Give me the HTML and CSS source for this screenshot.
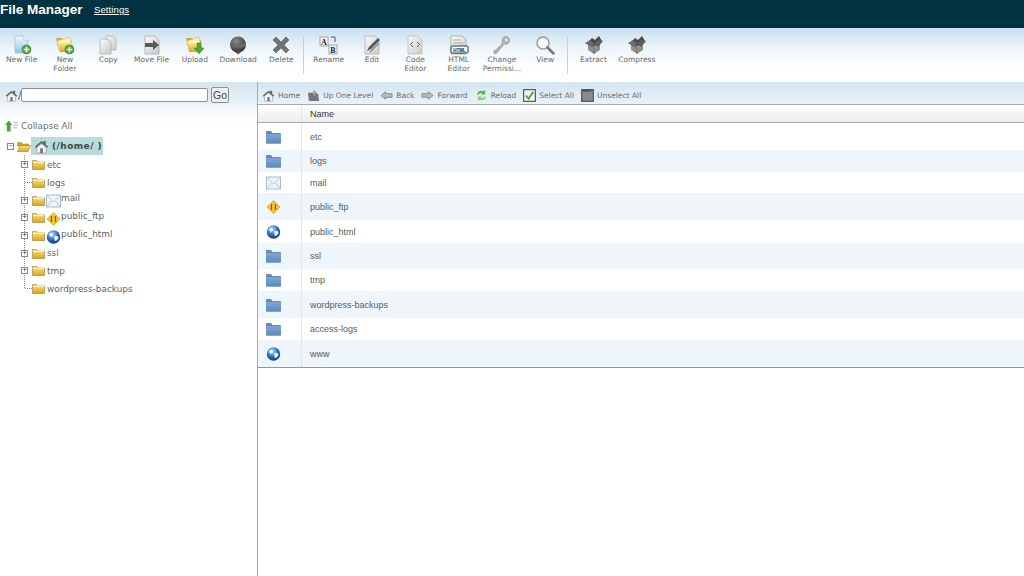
FILE: index.html
```html
<!DOCTYPE html>
<html lang="en">
<head>
<meta charset="utf-8">
<title>File Manager</title>
<link rel="stylesheet" href="styles.css">
</head>
<body>
<svg class="defs" width="0" height="0" aria-hidden="true">
  <defs>
    <linearGradient id="gFolder" x1="0" y1="0" x2="0" y2="1"><stop offset="0" stop-color="#fbe48a"/><stop offset="1" stop-color="#d9a520"/></linearGradient>
    <linearGradient id="gBlue" x1="0" y1="0" x2="0" y2="1"><stop offset="0" stop-color="#7ea6d6"/><stop offset="1" stop-color="#5f88bb"/></linearGradient>
    <linearGradient id="gPage" x1="0" y1="0" x2="1" y2="1"><stop offset="0" stop-color="#fafafa"/><stop offset="1" stop-color="#c9c9c9"/></linearGradient>
    <linearGradient id="gNew" x1="0" y1="0" x2="0" y2="1"><stop offset="0" stop-color="#f2f8fd"/><stop offset="1" stop-color="#8fc4ec"/></linearGradient>
    <radialGradient id="gGlobe" cx=".4" cy=".3" r=".8"><stop offset="0" stop-color="#bfe0fa"/><stop offset=".5" stop-color="#2a6fc0"/><stop offset="1" stop-color="#0c2f74"/></radialGradient>
    <radialGradient id="gBall" cx=".4" cy=".3" r=".8"><stop offset="0" stop-color="#8a8a8a"/><stop offset="1" stop-color="#2c2c2c"/></radialGradient>

    <symbol id="i-plus" viewBox="0 0 10 10"><circle cx="5" cy="5" r="4.6" fill="#4fa53c" stroke="#2f7d2a" stroke-width=".6"/><path d="M5 2.2v5.6M2.2 5h5.6" stroke="#fff" stroke-width="1.5"/></symbol>
    <symbol id="i-newfile" viewBox="0 0 20 20"><path d="M3 1h9l4 4v13H3z" fill="url(#gNew)" stroke="#9dbcd6" stroke-width=".7"/><path d="M12 1v4h4" fill="#fff" stroke="#9dbcd6" stroke-width=".7"/><use href="#i-plus" x="9.5" y="9.5" width="10" height="10"/></symbol>
    <symbol id="i-newfolder" viewBox="0 0 20 20"><path d="M1 3h6l2 2h7l2 11H4z" fill="#d4a93a"/><path d="M2 6l13-4 2 10-12 5z" fill="#fdf2b8" stroke="#cfa83a" stroke-width=".5"/><path d="M4 8h14l-1 9H5z" fill="url(#gFolder)"/><use href="#i-plus" x="9.5" y="9.5" width="10" height="10"/></symbol>
    <symbol id="i-copy" viewBox="0 0 20 20"><path d="M8 1h7l3 3v11H8z" fill="url(#gPage)" stroke="#aaa" stroke-width=".7"/><path d="M2 4h8l3 3v12H2z" fill="url(#gPage)" stroke="#aaa" stroke-width=".7"/></symbol>
    <symbol id="i-move" viewBox="0 0 20 20"><path d="M3 1h10l4 4v14H3z" fill="url(#gPage)" stroke="#a5a5a5" stroke-width=".7"/><path d="M3 8h8V5l6 5-6 5v-3H3z" fill="#5a5a5a"/></symbol>
    <symbol id="i-upload" viewBox="0 0 20 20"><path d="M1 3h6l2 2h7l2 11H4z" fill="#d4a93a"/><path d="M2 6l12-4 2 10-11 5z" fill="#fdf2b8" stroke="#cfa83a" stroke-width=".5"/><path d="M3 8h14l-1 9H4z" fill="url(#gFolder)"/><path d="M12 8h4v5h3l-5 6-5-6h3z" fill="#49a838" stroke="#2f7d2a" stroke-width=".4"/></symbol>
    <symbol id="i-download" viewBox="0 0 20 20"><circle cx="10" cy="9.5" r="8" fill="url(#gBall)"/><path d="M2 8c5 2.500 11 2.500 16 0v3c-5 2.500-11 2.500-16 0z" fill="#6a6a6a"/><path d="M7 17h6l-3 2.500z" fill="#555"/></symbol>
    <symbol id="i-delete" viewBox="0 0 20 20"><path d="M2 5l3-3 5 5 5-5 3 3-5 5 5 5-3 3-5-5-5 5-3-3 5-5z" fill="#727272" stroke="#5a5a5a" stroke-width=".6"/></symbol>
    <symbol id="i-rename" viewBox="0 0 20 20"><rect x="1" y="2" width="8" height="9" fill="#f4f4f4" stroke="#777" stroke-width=".6"/><rect x="10" y="10" width="8" height="9" fill="#f4f4f4" stroke="#777" stroke-width=".6"/><text class="svg-letter" x="5" y="9.500" text-anchor="middle">A</text><text class="svg-letter" x="14" y="17.500" text-anchor="middle">B</text><path d="M12 2h4v5" fill="none" stroke="#555" stroke-width="1"/></symbol>
    <symbol id="i-edit" viewBox="0 0 20 20"><path d="M3 1h10l4 4v14H3z" fill="url(#gPage)" stroke="#aaa" stroke-width=".7"/><path d="M5 16l2-4 9-9 2 2-9 9z" fill="#555"/><path d="M8 17l9-9" stroke="#888" stroke-width="1.200"/></symbol>
    <symbol id="i-code" viewBox="0 0 20 20"><path d="M3 1h10l4 4v14H3z" fill="url(#gPage)" stroke="#b5b5b5" stroke-width=".7"/><path d="M8 7l-2.500 2.500L8 12M12 7l2.500 2.500L12 12" fill="none" stroke="#555" stroke-width="1"/></symbol>
    <symbol id="i-html" viewBox="0 0 20 20"><path d="M2 1h11l4 4v14H2z" fill="url(#gPage)" stroke="#999" stroke-width=".7"/><path d="M4 5h7M4 8h10" stroke="#999" stroke-width=".8"/><rect x="2" y="11" width="17" height="7" rx="1" fill="#fff" stroke="#333" stroke-width="1"/><text class="svg-tiny" x="10.500" y="16.500" text-anchor="middle">HTML</text></symbol>
    <symbol id="i-key" viewBox="0 0 20 20"><path d="M12 2c3-1.500 6 1 5.500 4-.3 2.500-3 4-5.500 3L5 18l-3 1v-3l1-1 1 .5.500-1.500 1.500-.5.500-1.500 1.500-.5 2-2.500C10 6 10 3.500 12 2z" fill="#b5b5b5" stroke="#8a8a8a" stroke-width=".6"/><circle cx="14.500" cy="5" r="1.300" fill="#eee"/></symbol>
    <symbol id="i-view" viewBox="0 0 20 20"><circle cx="8" cy="8" r="6" fill="#f5f9fc" stroke="#9a9a9a" stroke-width="1.500"/><path d="M12.500 12.500l6 6" stroke="#777" stroke-width="2.500" stroke-linecap="round"/></symbol>
    <symbol id="i-box" viewBox="0 0 20 20"><path d="M4 9l6 3 6-3v6l-6 4-6-4z" fill="#8f8f8f"/><path d="M10 12v7" stroke="#666" stroke-width=".7"/><path d="M3 8l5-5 3 2 4-4 3 5-3 3-6 3z" fill="#4a4a4a"/><path d="M1 8l5-3 4 4-3 3z" fill="#6c6c6c"/><path d="M19 6l-5-1-4 4 4 3z" fill="#5f5f5f"/></symbol>
    <symbol id="i-home" viewBox="0 0 16 16"><path d="M1 8l7-6 2 1.700V2h2.500v3.800L15 8l-1 1.500L8 4.500 2 9.500z" fill="#666"/><path d="M3 9l5-4 5 4v6H3z" fill="#f2f2f2" stroke="#888" stroke-width=".6"/><rect x="6.500" y="10" width="3" height="5" fill="#777"/></symbol>
    <symbol id="i-up" viewBox="0 0 14 14"><path d="M1 4h4l1 1h6l1 8H2z" fill="#777"/><path d="M5 8h2V5H5l3-3.500L11 5H9v3z" fill="#aaa" stroke="#666" stroke-width=".4"/></symbol>
    <symbol id="i-back" viewBox="0 0 14 10"><path d="M1 5l5-4v2h7v4H6v2z" fill="#bbb" stroke="#777" stroke-width=".8"/></symbol>
    <symbol id="i-forward" viewBox="0 0 14 10"><path d="M13 5L8 1v2H1v4h7v2z" fill="#bbb" stroke="#777" stroke-width=".8"/></symbol>
    <symbol id="i-reload" viewBox="0 0 14 14"><path d="M2 6c.5-3 4-5 7-3.500L11 1v5H6l1.500-1.500C6 4 4.500 5 4 6z" fill="#5cb84a"/><path d="M12 8c-.5 3-4 5-7 3.500L3 13V8h5l-1.500 1.500C8 10 9.500 9 10 8z" fill="#8fd07e"/></symbol>
    <symbol id="i-check" viewBox="0 0 14 14"><rect x=".7" y=".7" width="12.600" height="12.600" fill="#f7f7f7" stroke="#555" stroke-width="1.300"/><path d="M3 7l3 3.500L11 3" fill="none" stroke="#3aa832" stroke-width="2"/></symbol>
    <symbol id="i-uncheck" viewBox="0 0 14 14"><rect x=".7" y=".7" width="12.600" height="12.600" fill="#8a8a8a" stroke="#555" stroke-width="1.300"/><path d="M2 2h9" stroke="#444" stroke-width="1.500"/></symbol>
    <symbol id="i-collapse" viewBox="0 0 14 12"><path d="M4 0l4 5H6v7H2V5H0z" fill="#4fa53c"/><path d="M9 2h5M9 5h5M9 8h4" stroke="#aaa" stroke-width="1"/></symbol>
    <symbol id="i-tfolder" viewBox="0 0 13 11"><path d="M.5 1.500h4l1 1.500h7v7.500H.5z" fill="url(#gFolder)" stroke="#a07c20" stroke-width=".6"/><path d="M1 3.500h11" stroke="#fff6c8" stroke-width="1"/></symbol>
    <symbol id="i-topen" viewBox="0 0 14 11"><path d="M.5 1.500h4l1 1.500h6v2H.5z" fill="#d9a520" stroke="#a07c20" stroke-width=".5"/><path d="M.5 10.500L3 4.500h10.500L11 10.500z" fill="url(#gFolder)" stroke="#a07c20" stroke-width=".6"/></symbol>
    <symbol id="i-bfolder" viewBox="0 0 15 13"><path d="M0 1.500C0 .7.500.5 1 .5h4l1.500 2H14c.6 0 1 .4 1 1V12c0 .6-.4 1-1 1H1c-.6 0-1-.4-1-1z" fill="#6c8aad"/><rect x="0" y="3.500" width="15" height="9.500" rx="1" fill="url(#gBlue)"/></symbol>
    <symbol id="i-mail" viewBox="0 0 15 13"><rect x=".5" y=".5" width="14" height="12" fill="#eef4fa" stroke="#a5bdd3"/><path d="M.5 .5l7 7 7-7M.5 12.500l5-6M14.500 12.500l-5-6" fill="none" stroke="#a5bdd3" stroke-width=".8"/></symbol>
    <symbol id="i-ftp" viewBox="0 0 14 14"><path d="M7 .5L13.500 7 7 13.500.5 7z" fill="#f5c52e" stroke="#c9962a" stroke-width=".6"/><path d="M5 4v6M9 4v6" stroke="#8a5a10" stroke-width="1.200"/></symbol>
    <symbol id="i-globe" viewBox="0 0 14 14"><circle cx="7" cy="7" r="6.700" fill="url(#gGlobe)"/><path d="M3 3.500c2-1 3 0 3.500 1S5 7 4 6.500 2.500 4.500 3 3.500zM8 6c2-.5 4 .5 4 1.500S10 11 9 11 7.500 7 8 6z" fill="#e9f4fd"/></symbol>
  </defs>
</svg>

<header class="topbar">
  <h1 class="brand">File Manager</h1>
  <a class="settings" href="#">Settings</a>
</header>

<nav class="toolbar">
  <a class="tool"><svg class="tool-icon"><use href="#i-newfile"/></svg><span>New File</span></a>
  <a class="tool"><svg class="tool-icon"><use href="#i-newfolder"/></svg><span>New<br>Folder</span></a>
  <a class="tool"><svg class="tool-icon"><use href="#i-copy"/></svg><span>Copy</span></a>
  <a class="tool"><svg class="tool-icon"><use href="#i-move"/></svg><span>Move File</span></a>
  <a class="tool"><svg class="tool-icon"><use href="#i-upload"/></svg><span>Upload</span></a>
  <a class="tool"><svg class="tool-icon"><use href="#i-download"/></svg><span>Download</span></a>
  <a class="tool"><svg class="tool-icon"><use href="#i-delete"/></svg><span>Delete</span></a>
  <i class="tool-sep"></i>
  <a class="tool"><svg class="tool-icon"><use href="#i-rename"/></svg><span>Rename</span></a>
  <a class="tool"><svg class="tool-icon"><use href="#i-edit"/></svg><span>Edit</span></a>
  <a class="tool"><svg class="tool-icon"><use href="#i-code"/></svg><span>Code<br>Editor</span></a>
  <a class="tool"><svg class="tool-icon"><use href="#i-html"/></svg><span>HTML<br>Editor</span></a>
  <a class="tool"><svg class="tool-icon"><use href="#i-key"/></svg><span>Change<br>Permissi...</span></a>
  <a class="tool"><svg class="tool-icon"><use href="#i-view"/></svg><span>View</span></a>
  <i class="tool-sep"></i>
  <a class="tool tool-after"><svg class="tool-icon"><use href="#i-box"/></svg><span>Extract</span></a>
  <a class="tool"><svg class="tool-icon"><use href="#i-box"/></svg><span>Compress</span></a>
</nav>

<main class="panes">
  <aside class="left">
    <form class="pathbar">
      <svg class="path-home"><use href="#i-home"/></svg><span class="slash">/</span>
      <input class="path-input" type="text" aria-label="Path">
      <button class="go" type="button">Go</button>
    </form>
    <div class="collapse"><svg class="collapse-icon"><use href="#i-collapse"/></svg><span>Collapse All</span></div>
    <div class="root">
      <span class="exp exp-root">−</span>
      <svg class="f-open"><use href="#i-topen"/></svg>
      <span class="root-label"><svg class="root-home"><use href="#i-home"/></svg><b>(/home/ )</b></span>
    </div>
    <ul class="tree">
      <li class="node"><span class="exp">+</span><svg class="f"><use href="#i-tfolder"/></svg><span>etc</span></li>
      <li class="node"><span class="tick"></span><svg class="f"><use href="#i-tfolder"/></svg><span>logs</span></li>
      <li class="node"><span class="exp">+</span><svg class="f"><use href="#i-tfolder"/></svg><svg class="badge"><use href="#i-mail"/></svg><span class="raised">mail</span></li>
      <li class="node"><span class="exp">+</span><svg class="f"><use href="#i-tfolder"/></svg><svg class="badge"><use href="#i-ftp"/></svg><span class="raised">public_ftp</span></li>
      <li class="node"><span class="exp">+</span><svg class="f"><use href="#i-tfolder"/></svg><svg class="badge"><use href="#i-globe"/></svg><span class="raised">public_html</span></li>
      <li class="node"><span class="exp">+</span><svg class="f"><use href="#i-tfolder"/></svg><span>ssl</span></li>
      <li class="node"><span class="exp">+</span><svg class="f"><use href="#i-tfolder"/></svg><span>tmp</span></li>
      <li class="node"><span class="tick"></span><svg class="f"><use href="#i-tfolder"/></svg><span>wordpress-backups</span></li>
    </ul>
  </aside>

  <section class="right">
    <div class="navbar">
      <a class="nav nav-home"><svg class="nav-i"><use href="#i-home"/></svg>Home</a>
      <a class="nav"><svg class="nav-i"><use href="#i-up"/></svg>Up One Level</a>
      <a class="nav"><svg class="nav-i"><use href="#i-back"/></svg>Back</a>
      <a class="nav"><svg class="nav-i"><use href="#i-forward"/></svg>Forward</a>
      <a class="nav"><svg class="nav-i"><use href="#i-reload"/></svg>Reload</a>
      <a class="nav"><svg class="nav-i"><use href="#i-check"/></svg>Select All</a>
      <a class="nav"><svg class="nav-i"><use href="#i-uncheck"/></svg>Unselect All</a>
    </div>
    <div class="list">
      <div class="row head"><span class="c-icon"></span><span class="c-name">Name</span></div>
      <div class="row h27"><span class="c-icon"><svg class="li"><use href="#i-bfolder"/></svg></span><span class="c-name">etc</span></div>
      <div class="row alt h22"><span class="c-icon"><svg class="li"><use href="#i-bfolder"/></svg></span><span class="c-name">logs</span></div>
      <div class="row h21"><span class="c-icon"><svg class="li"><use href="#i-mail"/></svg></span><span class="c-name">mail</span></div>
      <div class="row alt h27"><span class="c-icon"><svg class="li"><use href="#i-ftp"/></svg></span><span class="c-name">public_ftp</span></div>
      <div class="row h23"><span class="c-icon"><svg class="li"><use href="#i-globe"/></svg></span><span class="c-name">public_html</span></div>
      <div class="row alt h26"><span class="c-icon"><svg class="li"><use href="#i-bfolder"/></svg></span><span class="c-name">ssl</span></div>
      <div class="row h22"><span class="c-icon"><svg class="li"><use href="#i-bfolder"/></svg></span><span class="c-name">tmp</span></div>
      <div class="row alt h27"><span class="c-icon"><svg class="li"><use href="#i-bfolder"/></svg></span><span class="c-name">wordpress-backups</span></div>
      <div class="row h22"><span class="c-icon"><svg class="li"><use href="#i-bfolder"/></svg></span><span class="c-name">access-logs</span></div>
      <div class="row alt h27"><span class="c-icon"><svg class="li"><use href="#i-globe"/></svg></span><span class="c-name">www</span></div>
    </div>
  </section>
</main>
</body>
</html>
```
FILE: styles.css
```css
* { box-sizing: border-box; }
html, body { margin: 0; height: 100%; overflow: hidden; }
body { width: 1024px; height: 576px; background: #fff; display: flex; flex-direction: column; font-family: "DejaVu Sans", sans-serif; color: #666; }
.defs { display: block; height: 0; width: 0; overflow: hidden; flex: none; }
a { color: inherit; text-decoration: none; }

.topbar { height: 28px; flex: none; background: #00323f; display: flex; align-items: flex-start; padding-top: 2px; }
.brand { margin: 1px 0 0; font: bold 13.5px/14px "Liberation Sans", sans-serif; color: #fff; width: 94px; }
.settings { font: 9.5px/15px "Liberation Sans", sans-serif; color: #fff; text-decoration: underline; letter-spacing: .1px; }

.toolbar { height: 54px; flex: none; display: flex; align-items: flex-start; background: linear-gradient(#c7dfee, #eef6fa 40%, #fff 75%); padding-top: 7px; }
.tool { width: 43.3px; flex: none; display: flex; flex-direction: column; align-items: center; font-size: 7.5px; line-height: 9px; color: #6a6a6a; text-align: center; white-space: nowrap; }
.tool-icon { width: 20px; height: 20px; margin-bottom: 0; }
.tool-sep { width: 1px; height: 38px; flex: none; background: #c5cfd6; margin: 1px 3px 0 0; }
.tool-after { margin-left: 1px; }
.svg-letter { font: bold 8px "Liberation Serif", serif; fill: #222; }
.svg-tiny { font: bold 4.5px "Liberation Sans", sans-serif; fill: #222; }

.panes { flex: 1; display: flex; min-height: 0; }
.left { width: 257px; flex: none; display: flex; flex-direction: column; background: #fff; }
.pathbar { height: 23px; margin: 0; display: flex; align-items: center; padding: 3px 0 0 5px; background: linear-gradient(#d3e5f1, #e9f2f8); }
.path-home { width: 13px; height: 13px; }
.slash { font-size: 10px; width: 3px; color: #555; }
.path-input { width: 187px; height: 14px; margin: 0 3px 0 0; border: 1px solid #8f8f8f; border-radius: 2px; background: #fff; padding: 0; }
.go { width: 18px; height: 16px; padding: 0; border: 1px solid #8f8f8f; border-radius: 2px; background: #f0f0f0; font: 10.5px/14px "Liberation Sans", sans-serif; color: #444; }

.collapse { display: flex; align-items: center; gap: 3px; padding: 12px 0 0 5px; font-size: 8.9px; height: 30px; flex: none; color: #6e6e6e; background: linear-gradient(#f0f6fa, #fff 60%); }
.collapse-icon { width: 13px; height: 12px; }

.root { display: flex; align-items: center; height: 18px; flex: none; margin-top: 2px; padding-left: 7px; }
.exp { width: 7px; height: 7px; flex: none; border: 1px solid #888; background: #fff; font: 7px/5px "DejaVu Sans Mono", monospace; color: #333; text-align: center; overflow: hidden; }
.exp-root { margin-right: 3px; color: #666; }
.f-open { width: 14px; height: 11px; flex: none; }
.root-label { display: flex; align-items: center; height: 18px; width: 72px; background: #b8dcdc; padding-left: 3px; }
.root-home { width: 15px; height: 15px; flex: none; margin-right: 3px; }
.root-label b { font-size: 9px; letter-spacing: .45px; color: #444; white-space: nowrap; }

.tree { list-style: none; margin: 0 0 0 24px; padding: 0; border-left: 1px dotted #888; width: 160px; height: 133px; display: block; }
.node { height: 17.7px; display: flex; align-items: center; font-size: 8.9px; color: #5f5f5f; white-space: nowrap; }
.node:first-child { margin-top: 1px; }
.node .exp { margin-left: -4px; margin-right: 4px; }
.tick { width: 7px; height: 0; flex: none; border-top: 1px dotted #888; margin-right: 0; }
.f { width: 13px; height: 11px; flex: none; margin-right: 2px; }
.badge { width: 15px; height: 14px; flex: none; margin: 2px 0 0 -1px; }
.raised { margin-top: -4px; }

.right { flex: 1; min-width: 0; display: flex; flex-direction: column; border-left: 1px solid #a9a9a9; }
.navbar { height: 23px; flex: none; display: flex; align-items: center; padding: 4px 0 0 4px; font-size: 7.5px; color: #6a6a6a; background: linear-gradient(#d3e5f1, #e9f2f8); white-space: nowrap; border-bottom: 1px solid #a9a9a9; }
.nav { display: flex; align-items: center; gap: 3px; margin-right: 7px; }
.nav-i { width: 13px; height: 13px; flex: none; }

.list { border-bottom: 1px solid #8b97a3; flex: none; }
.row { display: flex; align-items: center; font: 9px/12px "Liberation Sans", sans-serif; color: #5a5a5a; background: #fff; }
.row.alt { background: #eef5fb; }
.head { height: 18px; background: linear-gradient(#fff, #ececec); border-bottom: 1px solid #a9a9a9; color: #333; }
.h21 { height: 21px; }
.h22 { height: 22px; }
.h23 { height: 23px; }
.h26 { height: 26px; }
.h27 { height: 27px; }
.c-icon { width: 44px; align-self: stretch; flex: none; display: flex; align-items: center; padding-left: 8px; border-right: 1px solid #dfe5ea; }
.c-name { padding-left: 8px; }
.li { width: 15px; height: 14px; }
```
